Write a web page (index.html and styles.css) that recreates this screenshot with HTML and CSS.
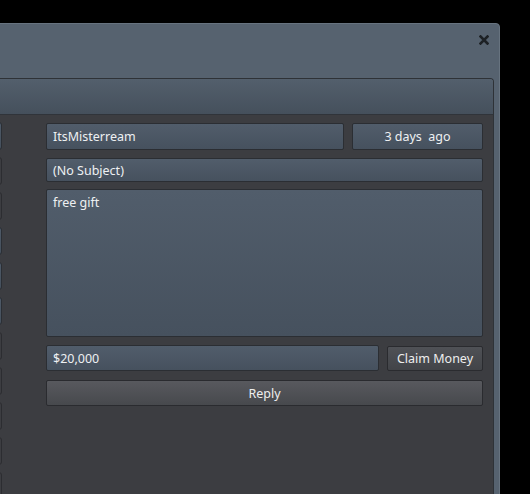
FILE: index.html
```html
<!DOCTYPE html>
<html lang="en">
<head>
    <meta charset="UTF-8">
    <meta name="viewport" content="width=device-width, initial-scale=1.0">
    <title>Mail</title>
    <link rel="stylesheet" href="styles.css">
</head>
<body>
    <div class="window">
        <div class="titleBar">
            <button class="close" title="Close">
                <svg width="10" height="10" viewBox="0 0 10 10">
                    <path d="M1.5 1.5 L8.5 8.5 M8.5 1.5 L1.5 8.5" stroke="#1d2125" stroke-width="2.6" stroke-linecap="square"/>
                </svg>
            </button>
        </div>
        <div class="panel">
            <div class="panelHeader"></div>
            <div class="panelBody">
                <div class="mailList">
                    <div class="mailItem unread"></div>
                    <div class="mailItem"></div>
                    <div class="mailItem"></div>
                    <div class="mailItem unread"></div>
                    <div class="mailItem unread"></div>
                    <div class="mailItem unread"></div>
                    <div class="mailItem"></div>
                    <div class="mailItem"></div>
                    <div class="mailItem"></div>
                    <div class="mailItem"></div>
                    <div class="mailItem"></div>
                </div>
                <div class="mailView">
                    <div class="row">
                        <div class="field sender">ItsMisterream</div>
                        <div class="field date">3 days&nbsp; ago</div>
                    </div>
                    <div class="field subject">(No Subject)</div>
                    <div class="field message">free gift</div>
                    <div class="row">
                        <div class="field money">$20,000</div>
                        <button class="btn claim">Claim Money</button>
                    </div>
                    <button class="btn reply">Reply</button>
                </div>
            </div>
        </div>
    </div>
</body>
</html>
```

FILE: styles.css
```css
*{
    box-sizing: border-box;
    font-family: "Noto Sans", "Open Sans", sans-serif;
}
body{
    margin: 0;
    padding-top: 23px;
    background-color: #000;
    height: 494px;
    overflow: hidden;
}
.window{
    width: 800px;
    height: 480px;
    margin-left: -300px;
    padding: 0 5px 0 5px;
    background-color: #56626f;
    border: 1px solid #67737f;
    border-radius: 4px 4px 0 0;
    display: flex;
    flex-direction: column;
}
.titleBar{
    height: 54px;
    display: flex;
    justify-content: flex-end;
    align-items: flex-start;
    padding: 11px 5px 0 0;
}
.close{
    border: none;
    background: none;
    padding: 0;
    width: 10px;
    height: 10px;
    display: flex;
}
.panel{
    flex: 1;
    border: 1px solid #2e3237;
    border-bottom: none;
    border-radius: 4px 4px 0 0;
    display: flex;
    flex-direction: column;
    overflow: hidden;
}
.panelHeader{
    height: 36px;
    background: linear-gradient(#535f6c, #45505c);
    border-bottom: 1px solid #30343a;
}
.panelBody{
    flex: 1;
    background-color: #3c3d41;
    display: flex;
    gap: 44px;
    padding: 7px 10px 0 6px;
}
.mailList{
    width: 289px;
    display: flex;
    flex-direction: column;
    gap: 7px;
}
.mailItem{
    height: 28px;
    flex-shrink: 0;
    border: 1px solid #2c2d31;
    border-radius: 3px;
}
.mailItem.unread{
    background: linear-gradient(#4e5a68, #45505c);
    border-color: #2b2f35;
}
.mailView{
    flex: 1;
    display: flex;
    flex-direction: column;
    gap: 8px;
    padding-top: 1px;
}
.row{
    display: flex;
    gap: 8px;
    align-items: center;
}
.field{
    height: 25px;
    padding: 0 6px;
    display: flex;
    align-items: center;
    background: linear-gradient(#515d6b, #46515e);
    border: 1px solid #2b2e33;
    border-radius: 2px;
    color: #eef0f2;
    font-size: 12.5px;
}
.sender{
    flex: 1;
    height: 27px;
}
.date{
    width: 131px;
    height: 27px;
    justify-content: center;
}
.subject{
    height: 24px;
}
.message{
    height: 148px;
    margin-top: -1px;
    align-items: flex-start;
    padding-top: 4px;
}
.money{
    flex: 1;
    height: 26px;
}
.btn{
    height: 26px;
    border: 1px solid #2a2b2f;
    border-radius: 2px;
    color: #eeeeee;
    font-size: 12.5px;
    padding: 0;
}
.claim{
    width: 96px;
    height: 25px;
    background: linear-gradient(#4f5156, #424448);
}
.reply{
    width: 100%;
    margin-top: 1px;
    background: linear-gradient(#58595e, #47494d);
}
```
